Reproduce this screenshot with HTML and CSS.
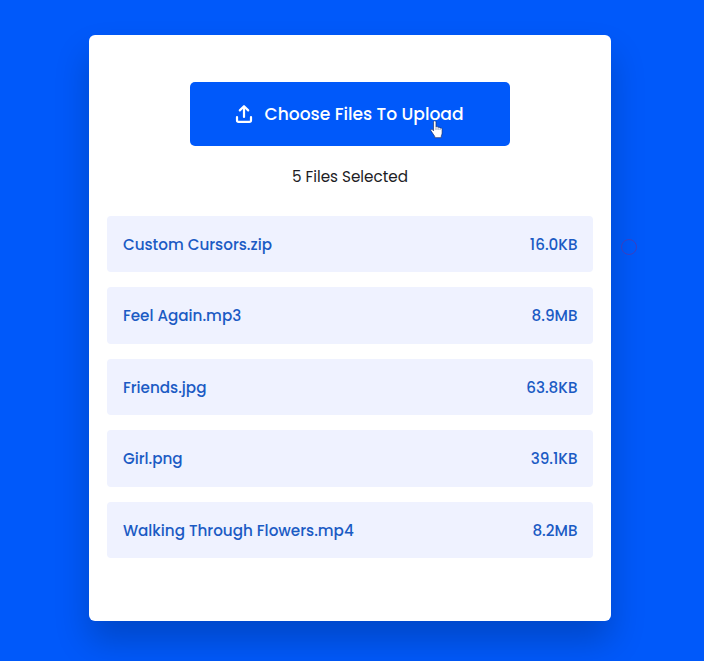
FILE: index.html
```html
<!DOCTYPE html>
<html lang="en">
<head>
<meta charset="UTF-8">
<title>File Upload</title>
<link rel="stylesheet" href="styles.css">
</head>
<body>
<main class="container">
  <button class="upload" type="button">
    <svg class="upload-icon" viewBox="0 0 18 20" aria-hidden="true"><path d="M9 13V2.5M4.8 6.4 9 2.2l4.200 4.200M2 13v3.200q0 1.600 1.600 1.600h10.800q1.600 0 1.600-1.600V13"/></svg>
    <span class="upload-label">Choose Files To Upload</span>
    <svg class="pointer" viewBox="0 0 12 18" aria-hidden="true"><path d="M3.200 10.200V2.100c0-1.900 2.300-1.900 2.300 0v4.600c.5-.7 1.800-.6 2 .4.600-.6 1.700-.3 1.900.6.800-.4 1.900.1 1.900 1.200v3.500c0 1.500-.8 2.100-.8 3v1.300H4.300v-1.200C3.300 14 1.900 11.900.8 10.300.1 9.200 1.400 8.400 2.200 9.200z"/><path class="pointer-lines" d="M5.500 7v2.500M7.500 7.500v2M9.400 8v1.500"/></svg>
  </button>
  <p class="count">5 Files Selected</p>
  <ul class="files">
    <li class="file"><span>Custom Cursors.zip</span><span>16.0KB</span></li>
    <li class="file"><span>Feel Again.mp3</span><span>8.9MB</span></li>
    <li class="file"><span>Friends.jpg</span><span>63.8KB</span></li>
    <li class="file"><span>Girl.png</span><span>39.1KB</span></li>
    <li class="file"><span>Walking Through Flowers.mp4</span><span>8.2MB</span></li>
  </ul>
  <span class="click-ring"></span>
</main>
</body>
</html>
```
FILE: styles.css
```css
* { box-sizing: border-box; margin: 0; padding: 0; }
body {
  min-height: 661px;
  padding: 35px 0 0 88.5px;
  overflow: hidden;
  background: #0059fa;
  font-family: Poppins, Inter, sans-serif;
}
.container {
  position: relative;
  width: 522.9px;
  height: 586px;
  padding: 47px 18.4px 0;
  border-radius: 6px;
  background: #fff;
  box-shadow: 0 20px 35px rgba(0, 0, 0, 0.2);
}
.upload {
  position: relative;
  display: flex;
  align-items: center;
  width: 320px;
  height: 63.5px;
  margin: 0 auto;
  padding-left: 45.4px;
  border: 0;
  border-radius: 5px;
  background: #0059fa;
  color: #fff;
  font: 500 17.08px Poppins, Inter, sans-serif;
  white-space: nowrap;
}
.upload-icon {
  width: 18px;
  height: 20px;
  margin-right: 11.2px;
  fill: none;
  stroke: #fff;
  stroke-width: 2.2;
  stroke-linecap: round;
  stroke-linejoin: round;
}
.pointer {
  position: absolute;
  left: 240px;
  top: 37.5px;
  width: 13px;
  height: 19px;
  overflow: visible;
  fill: #fff;
  stroke: #182958;
  stroke-width: 0.6;
}
.pointer-lines { stroke-width: 0.4; }
.count {
  height: 24px;
  margin: 19.2px 0 27.1px;
  color: #1c1c24;
  font-size: 15.2px;
  line-height: 24px;
  text-align: center;
}
.files {
  display: grid;
  gap: 15px;
  list-style: none;
}
.file {
  display: flex;
  align-items: center;
  justify-content: space-between;
  height: 56.5px;
  padding: 0 15.5px 0 16px;
  border-radius: 4px;
  background: #eff2ff;
  color: #1b5bc4;
  font-size: 15.2px;
  font-weight: 500;
}
.click-ring {
  position: absolute;
  left: 532.5px;
  top: 203.5px;
  width: 16px;
  height: 16px;
  border: 1px solid #3a40c0;
  border-radius: 50%;
}
```
